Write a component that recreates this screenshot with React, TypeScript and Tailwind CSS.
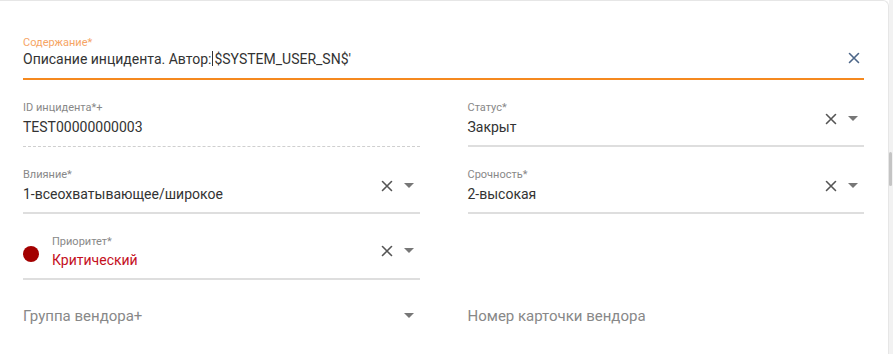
import React from 'react';

const ClearIcon: React.FC<{ className?: string }> = ({ className = 'text-[#555]' }) => (
  <svg width="12" height="12" viewBox="0 0 12 12" className={className}>
    <path d="M1.5 1.5 L10.5 10.5 M10.5 1.5 L1.5 10.5" stroke="currentColor" strokeWidth="1.6" strokeLinecap="round" />
  </svg>
);

const ArrowIcon: React.FC = () => (
  <svg width="10" height="6" viewBox="0 0 10 6" className="text-[#777]">
    <path d="M0 0 L10 0 L5 5 Z" fill="currentColor" />
  </svg>
);

type FieldProps = {
  label: string;
  value: string;
  clearable?: boolean;
  dropdown?: boolean;
  dashed?: boolean;
};

const Field: React.FC<FieldProps> = ({ label, value, clearable, dropdown, dashed }) => (
  <div
    className={`h-[67px] flex items-end ${
      dashed ? 'pb-[9px] border-b border-dashed border-[#cfcfcf]' : 'pb-[8px] border-b-2 border-[#dedede]'
    }`}
  >
    <div className="flex-1 min-w-0">
      <div className="text-[11px] leading-[14px] text-[#888]">{label}</div>
      <div className="mt-[2px] text-[14px] leading-[20px] text-[#333]">{value}</div>
    </div>
    {(clearable || dropdown) && (
      <div className="flex items-center gap-[11px] mb-[12px] pr-[6px]">
        {clearable && <ClearIcon />}
        {dropdown && <ArrowIcon />}
      </div>
    )}
  </div>
);

export default function App() {
  return (
    <div className="w-[893px] h-[354px] bg-white flex overflow-hidden" style={{ fontFamily: 'Roboto, "Noto Sans", sans-serif' }}>
      <div className="w-[889px] h-full border-t border-r border-[#e6e6e6] rounded-tr-[6px] pl-[23px] pr-[24px] pt-[35px]">
        {/* Содержание */}
        <div className="flex items-end border-b-2 border-[#f5891f] pb-[9px]">
          <div className="flex-1">
            <div className="text-[11px] leading-[14px] text-[#f6a565]">Содержание*</div>
            <div className="-mt-[1px] text-[14px] leading-[20px] text-[#333]">
              Описание инцидента. Автор:<span className="inline-block w-px h-[15px] bg-[#333] align-[-2px] mx-[1px]" />$SYSTEM_USER_SN$'
            </div>
          </div>
          <div className="mb-[5px] pr-[4px]">
            <ClearIcon className="text-[#4c6688]" />
          </div>
        </div>

        <div className="grid grid-cols-2 gap-x-[48px]">
          <Field label="ID инцидента*+" value="TEST00000000003" dashed />
          <Field label="Статус*" value="Закрыт" clearable dropdown />
          <Field label="Влияние*" value="1-всеохватывающее/широкое" clearable dropdown />
          <Field label="Срочность*" value="2-высокая" clearable dropdown />

          <div className="h-[66px] flex items-end pb-[8px] border-b-2 border-[#dedede]">
            <div className="w-[16px] h-[16px] rounded-full bg-[#a30000] mb-[8px] mr-[13px]" />
            <div className="flex-1">
              <div className="text-[11px] leading-[14px] text-[#888]">Приоритет*</div>
              <div className="mt-[1px] text-[14px] leading-[20px] text-[#c40f1e]">Критический</div>
            </div>
            <div className="flex items-center gap-[11px] mb-[13px] pr-[6px]">
              <ClearIcon />
              <ArrowIcon />
            </div>
          </div>
          <div />

          <div className="h-[50px] flex items-end pb-[4px]">
            <div className="flex-1 text-[15px] leading-[20px] text-[#888]">Группа вендора+</div>
            <div className="mb-[7px] pr-[6px]">
              <ArrowIcon />
            </div>
          </div>
          <div className="h-[50px] flex items-end pb-[4px]">
            <div className="text-[15px] leading-[20px] text-[#888]">Номер карточки вендора</div>
          </div>
        </div>
      </div>
      <div className="w-[4px] h-full bg-[#f2f2f2] relative">
        <div className="absolute left-0 top-[152px] w-[3px] h-[34px] bg-[#c4c4c4] rounded-sm" />
      </div>
    </div>
  );
}
